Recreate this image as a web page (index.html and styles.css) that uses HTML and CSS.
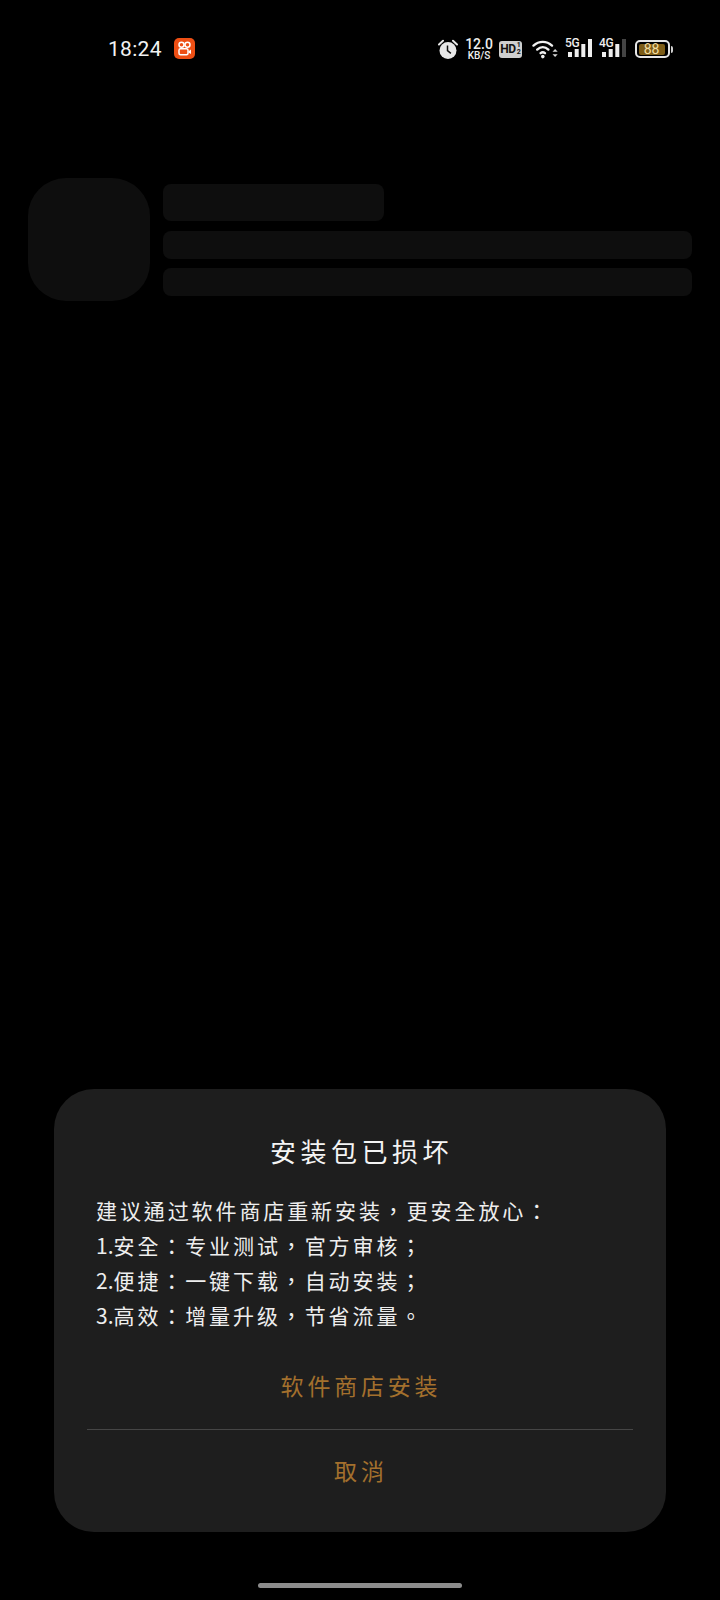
FILE: index.html
```html
<!DOCTYPE html>
<html lang="zh-CN">
<head>
    <meta charset="UTF-8">
    <meta name="viewport" content="width=device-width, initial-scale=1.0">
    <title>安装包已损坏</title>
    <link rel="stylesheet" href="styles.css">
</head>
<body>
    <div class="statusBar">
        <div class="statusLeft">
            <span class="clock">18:24</span>
            <svg class="appIcon" width="21" height="21" viewBox="0 0 21 21">
                <rect width="21" height="21" rx="5" fill="#ee4f14"/>
                <circle cx="7.5" cy="6.8" r="2.5" fill="none" stroke="#fff" stroke-width="1.5"/>
                <circle cx="13.5" cy="6.8" r="2.5" fill="none" stroke="#fff" stroke-width="1.5"/>
                <rect x="5" y="10.8" width="9" height="6" rx="1.5" fill="none" stroke="#fff" stroke-width="1.5"/>
                <path d="M14.5 13.2l2.5-1.6v4.4l-2.5-1.6z" fill="#fff"/>
            </svg>
        </div>
        <div class="statusRight">
            <svg width="20" height="21" viewBox="0 0 20 21">
                <path d="M1 5.5L5 1.8M19 5.5L15 1.8" stroke="#e8e8e8" stroke-width="2" stroke-linecap="round"/>
                <circle cx="10" cy="11.5" r="8.5" fill="#e8e8e8"/>
                <path d="M9.5 6.5v5.2l3.4 2.6" fill="none" stroke="#111" stroke-width="1.5"/>
            </svg>
            <div class="speed">
                <span class="speedNum">12.0</span>
                <span class="speedUnit">KB/S</span>
            </div>
            <div class="hdBadge">
                <span class="hdText">HD</span>
                <span class="hdFrac">1<br>2</span>
            </div>
            <svg class="wifi" width="26" height="20" viewBox="0 0 26 20">
                <g fill="none" stroke="#f0f0f0" stroke-width="2.4" stroke-linecap="round">
                    <path d="M1.5 6.6C7 1.6 14.5 1.6 20 6.6"/>
                    <path d="M5.2 10.6C8.6 7.4 13 7.4 16.4 10.6"/>
                    <path d="M8.6 14.2C10 13 11.6 13 13 14.2"/>
                </g>
                <circle cx="10.8" cy="17.6" r="1.8" fill="#f0f0f0"/>
                <path d="M20.5 12.8l2.6-2.8 2.6 2.8zM20.5 15.2l2.6 2.8 2.6-2.8z" fill="#d8d8d8"/>
            </svg>
            <div class="signal">
                <span class="netType">5G</span>
                <svg width="24" height="18" viewBox="0 0 24 18">
                    <rect x="0" y="13" width="4" height="5" fill="#eee"/>
                    <rect x="6.7" y="10" width="4" height="8" fill="#eee"/>
                    <rect x="13.3" y="5" width="4" height="13" fill="#eee"/>
                    <rect x="20" y="0" width="4" height="18" fill="#eee"/>
                </svg>
            </div>
            <div class="signal">
                <span class="netType">4G</span>
                <svg width="24" height="18" viewBox="0 0 24 18">
                    <rect x="0" y="13" width="4" height="5" fill="#eee"/>
                    <rect x="6.7" y="10" width="4" height="8" fill="#eee"/>
                    <rect x="13.3" y="5" width="4" height="13" fill="#eee"/>
                    <rect x="20" y="0" width="4" height="18" fill="#444"/>
                </svg>
            </div>
            <div class="battery">
                <div class="batteryBody"><span class="batteryFill">88</span></div>
                <div class="batteryTip"></div>
            </div>
        </div>
    </div>

    <div class="skeleton">
        <div class="skeletonIcon"></div>
        <div class="skeletonLines">
            <div class="skeletonTitle"></div>
            <div class="skeletonLine"></div>
            <div class="skeletonLine"></div>
        </div>
    </div>

    <div class="dialog">
        <h2 class="dialogTitle">安装包已损坏</h2>
        <div class="dialogText">
            <p>建议通过软件商店重新安装，更安全放心：</p>
            <p><span class="num">1.</span>安全：专业测试，官方审核；</p>
            <p><span class="num">2.</span>便捷：一键下载，自动安装；</p>
            <p><span class="num">3.</span>高效：增量升级，节省流量。</p>
        </div>
        <div class="dialogButton">软件商店安装</div>
        <div class="divider"></div>
        <div class="dialogButton cancel">取消</div>
    </div>

    <div class="homeBar"></div>
</body>
</html>
```

FILE: styles.css
```css
* {
    box-sizing: border-box;
}
body {
    width: 720px;
    height: 1600px;
    margin: 0;
    padding: 0;
    overflow: hidden;
    display: flex;
    flex-direction: column;
    background-color: #000000;
    color: #ffffff;
    font-family: "Noto Sans CJK TC", "Noto Sans", sans-serif;
}
.statusBar {
    display: flex;
    justify-content: space-between;
    align-items: center;
    height: 40px;
    margin-top: 29px;
    padding: 0 47px 0 108px;
    flex-shrink: 0;
}
.statusLeft {
    display: flex;
    align-items: center;
    gap: 12px;
}
.clock {
    font-family: Roboto, sans-serif;
    font-size: 21px;
    font-weight: 400;
    letter-spacing: 0.3px;
    color: #f2f2f2;
}
.appIcon {
    margin-bottom: 2px;
}
.statusRight {
    display: flex;
    align-items: center;
}
.speed {
    display: flex;
    flex-direction: column;
    align-items: center;
    width: 26px;
    margin-left: 8px;
    font-family: Roboto, sans-serif;
    font-weight: 500;
    color: #eeeeee;
}
.speedNum {
    font-size: 14px;
    line-height: 13px;
}
.speedUnit {
    font-size: 10px;
    line-height: 10px;
}
.hdBadge {
    display: flex;
    align-items: center;
    justify-content: center;
    gap: 1px;
    width: 23px;
    height: 17px;
    margin-left: 7px;
    border-radius: 3px;
    background-color: #cfcfcf;
    color: #111111;
    font-family: Roboto, sans-serif;
    font-weight: 700;
}
.hdText {
    font-size: 12px;
    letter-spacing: -0.5px;
}
.hdFrac {
    font-size: 7px;
    line-height: 7.5px;
}
.wifi {
    margin-left: 10px;
}
.signal {
    display: flex;
    justify-content: flex-end;
    position: relative;
    width: 27px;
    height: 18px;
    margin-left: 7px;
    margin-bottom: 3px;
}
.signal svg {
    display: block;
}
.netType {
    position: absolute;
    left: 0;
    top: -2px;
    font-family: Roboto, sans-serif;
    font-size: 12px;
    font-weight: 500;
    line-height: 12px;
    letter-spacing: -0.3px;
    color: #eeeeee;
}
.battery {
    display: flex;
    align-items: center;
    margin-left: 9px;
}
.batteryBody {
    width: 35px;
    height: 18px;
    padding: 1.5px;
    border: 2px solid #e6e6e6;
    border-radius: 5px;
}
.batteryFill {
    display: block;
    width: 26px;
    height: 100%;
    border-radius: 2px;
    background-color: #7d5d17;
    color: #f3dca0;
    font-family: Roboto, sans-serif;
    font-size: 14px;
    font-weight: 400;
    line-height: 11px;
    text-align: center;
}
.batteryTip {
    width: 2px;
    height: 7px;
    margin-left: 1px;
    border-radius: 0 2px 2px 0;
    background-color: #d0d0d0;
}
.skeleton {
    display: flex;
    gap: 13px;
    margin: 109px 28px 0;
    flex-shrink: 0;
}
.skeletonIcon {
    width: 122px;
    height: 123px;
    border-radius: 38px;
    background-color: #0e0e0e;
}
.skeletonLines {
    flex: 1;
    padding-top: 6px;
}
.skeletonTitle {
    width: 221px;
    height: 37px;
    margin-bottom: 10px;
    border-radius: 8px;
    background-color: #0e0e0e;
}
.skeletonLine {
    height: 28px;
    margin-bottom: 9px;
    border-radius: 8px;
    background-color: #0e0e0e;
}
.dialog {
    width: 612px;
    height: 443px;
    margin: auto auto 0;
    padding: 0 33px;
    border-radius: 40px;
    background-color: #1e1e1e;
    flex-shrink: 0;
    font-feature-settings: "locl" 0;
}
.dialogTitle {
    margin: 0;
    padding: 42px 0 0 3px;
    font-size: 26px;
    font-weight: 400;
    line-height: 40px;
    letter-spacing: 4.5px;
    text-align: center;
    color: #f4f4f4;
}
.dialogText {
    margin-top: 22px;
    padding-left: 9px;
    font-size: 21px;
    line-height: 35px;
    letter-spacing: 2.9px;
    color: #eeeeee;
}
.dialogText p {
    margin: 0;
    white-space: nowrap;
}
.num {
    letter-spacing: 0;
}
.dialogButton {
    height: 88px;
    padding-left: 2px;
    line-height: 88px;
    font-size: 23px;
    letter-spacing: 3.8px;
    text-align: center;
    color: #a3702d;
}
.dialogText + .dialogButton {
    margin-top: 8px;
}
.divider {
    height: 1px;
    background-color: #464646;
}
.cancel {
    height: 80px;
    line-height: 80px;
    letter-spacing: 4px;
}
.homeBar {
    width: 204px;
    height: 5px;
    margin: 51px auto 12px;
    border-radius: 3px;
    background-color: #8c8c8c;
    flex-shrink: 0;
}
```
